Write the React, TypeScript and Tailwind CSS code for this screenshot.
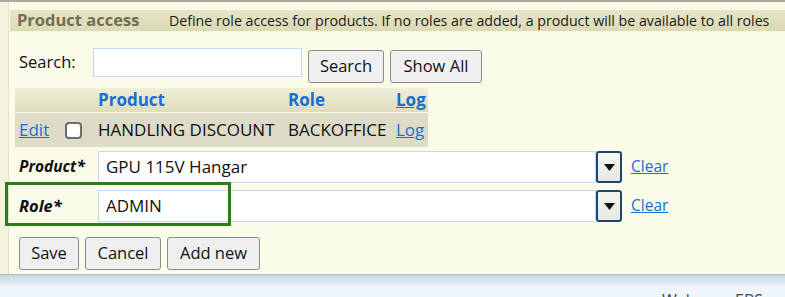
const FONT = { fontFamily: '"Open Sans", "Noto Sans", sans-serif' };

function Btn({ label, w }: { label: string; w: string }) {
  return (
    <button
      className={`${w} h-[33px] rounded-[3px] border border-[#8a8a8a] bg-[#efefef] text-[16.5px] text-[#111] leading-none`}
    >
      {label}
    </button>
  );
}

function Combo({ value }: { value: string }) {
  return (
    <div className="flex items-center">
      <div className="w-[498px] h-[32px] bg-white border border-[#c3d9f0] flex items-center pl-[7px] text-[17px] text-[#111]">
        {value}
      </div>
      <div className="w-[26px] h-[32px] rounded-[3px] border-2 border-[#1f4670] bg-gradient-to-b from-[#f6f6f2] to-[#e8e8e2] flex items-center justify-center">
        <svg width="11" height="7" viewBox="0 0 11 7">
          <path d="M0 0h11L5.5 7z" fill="#111" />
        </svg>
      </div>
      <a href="#" className="ml-[9px] text-[15.5px] text-[#1a6dd4] underline">
        Clear
      </a>
    </div>
  );
}

export default function App() {
  return (
    <div className="w-[785px] h-[297px] overflow-hidden bg-[#eef6fb] flex flex-col" style={FONT}>
      <div className="h-[2px] bg-[#a8a89c]" />
      <div className="flex h-[272px]">
        <div className="w-[9px] bg-[#f4f4de] border-r border-[#e3e3c6]" />
        <div className="flex-1 bg-[#fbfbea] relative pt-[8px]">
          {/* Header */}
          <div className="ml-[1px] h-[22px] bg-gradient-to-b from-[#e6e5c6] to-[#dbdab4] border-b border-[#f4f4e2] flex items-center">
            <span className="ml-[7px] w-[152px] text-[16.5px] font-bold text-[#6f6f55]">Product access</span>
            <span className="text-[14.2px] text-[#1a1a1a] whitespace-nowrap">
              Define role access for products. If no roles are added, a product will be available to all roles
            </span>
          </div>

          {/* Search */}
          <div className="flex items-start mt-[16px] ml-[10px]">
            <span className="mt-[2px] w-[74px] text-[16.5px] text-[#111]">Search:</span>
            <div className="w-[209px] h-[29px] bg-white border border-[#c3d9f0]" />
            <div className="flex gap-[6px] ml-[6px] mt-[2px]">
              <Btn label="Search" w="w-[76px]" />
              <Btn label="Show All" w="w-[92px]" />
            </div>
          </div>

          {/* Table */}
          <div className="ml-[6px] mt-[5px] w-[413px] text-[17px]">
            <div className="h-[24px] bg-gradient-to-b from-[#f0efd8] to-[#dedcb9] flex items-center font-bold text-[#1a6dd4]">
              <span className="ml-[83px] w-[190px]">Product</span>
              <span className="w-[108px]">Role</span>
              <a href="#" className="underline">Log</a>
            </div>
            <div className="mt-[1px] h-[34px] bg-[#dcdcc8] flex items-center text-[#111]">
              <a href="#" className="ml-[4px] w-[46px] text-[#1a6dd4] underline">Edit</a>
              <span className="w-[17px] h-[17px] rounded-[4px] border-2 border-[#6d6d6d] bg-white" />
              <span className="ml-[16px] w-[190px] whitespace-nowrap">HANDLING DISCOUNT</span>
              <span className="w-[108px]">BACKOFFICE</span>
              <a href="#" className="text-[#1a6dd4] underline">Log</a>
            </div>
          </div>

          {/* Product */}
          <div className="flex items-center mt-[4px] ml-[10px]">
            <span className="w-[79px] text-[15.5px] font-bold italic text-[#111]">Product*</span>
            <Combo value="GPU 115V Hangar" />
          </div>

          {/* Role */}
          <div className="flex items-center mt-[7px] ml-[10px]">
            <span className="w-[79px] text-[16.5px] font-bold italic text-[#111]">Role*</span>
            <Combo value="ADMIN" />
          </div>

          {/* highlight */}
          <div className="absolute left-[-4px] top-[180px] w-[226px] h-[44px] border-[3px] border-[#2f7a1c]" />

          {/* Buttons */}
          <div className="flex gap-[6px] mt-[15px] ml-[10px]">
            <Btn label="Save" w="w-[60px]" />
            <Btn label="Cancel" w="w-[76px]" />
            <Btn label="Add new" w="w-[93px]" />
          </div>
        </div>
      </div>
      <div className="h-[1px] bg-[#b4bcc4]" />
      <div className="flex-1 bg-gradient-to-b from-[#c9d5e2] via-[#eaf3fa] to-[#eef6fb] to-[40%] relative">
        <span className="absolute left-[662px] top-[13px] text-[16px] text-[#444]">Welcome EBS</span>
      </div>
    </div>
  );
}
